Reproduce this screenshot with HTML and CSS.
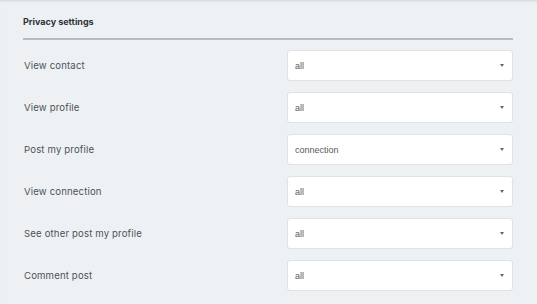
FILE: index.html
```html
<!DOCTYPE html>
<html lang="en">
  <head>
    <meta charset="UTF-8" />
    <meta name="viewport" content="width=device-width, initial-scale=1.0" />
    <title>Privacy settings</title>
    <link rel="stylesheet" href="styles.css">
  </head>
  <body>
    <main class="panel">
      <h2>Privacy settings</h2>
      <div class="rule"></div>

      <div class="rows">
        <div class="row">
          <label>View contact</label>
          <div class="select"><span>all</span><i class="caret"></i></div>
        </div>
        <div class="row">
          <label>View profile</label>
          <div class="select"><span>all</span><i class="caret"></i></div>
        </div>
        <div class="row">
          <label>Post my profile</label>
          <div class="select"><span>connection</span><i class="caret"></i></div>
        </div>
        <div class="row">
          <label>View connection</label>
          <div class="select"><span>all</span><i class="caret"></i></div>
        </div>
        <div class="row">
          <label>See other post my profile</label>
          <div class="select"><span>all</span><i class="caret"></i></div>
        </div>
        <div class="row">
          <label>Comment post</label>
          <div class="select"><span>all</span><i class="caret"></i></div>
        </div>
      </div>
    </main>
  </body>
</html>
```

FILE: styles.css
```css
* {
  margin: 0;
  padding: 0;
  box-sizing: border-box;
}

body {
  background-color: #edf1f4;
  font-family: "Inter", sans-serif;
  box-shadow: inset 0 3px 3px -2px rgba(0, 0, 0, 0.12);
  min-height: 100vh;
}

.panel {
  padding: 16px 24px 0 23px;
}

.panel h2 {
  font-size: 9px;
  font-weight: 700;
  line-height: 12px;
  color: #2f3337;
}

.rule {
  height: 2px;
  margin-top: 10px;
  background-color: #b6bbbf;
}

.rows {
  display: flex;
  flex-direction: column;
  gap: 11px;
  margin-top: 10px;
}

.row {
  display: flex;
  align-items: center;
  justify-content: space-between;
}

.row label {
  font-size: 9.6px;
  letter-spacing: 0.15px;
  color: #4d5258;
  padding-left: 1px;
}

.select {
  width: 226px;
  height: 31px;
  display: flex;
  align-items: center;
  justify-content: space-between;
  padding: 0 8px 0 7px;
  background-color: #fff;
  border: 1px solid #dfe3e7;
  border-radius: 3px;
  font-family: "Liberation Sans", Arial, sans-serif;
  font-size: 9px;
  color: #5a5a5a;
}

.caret {
  width: 0;
  height: 0;
  border-left: 2.5px solid transparent;
  border-right: 2.5px solid transparent;
  border-top: 3px solid #666;
}
```
